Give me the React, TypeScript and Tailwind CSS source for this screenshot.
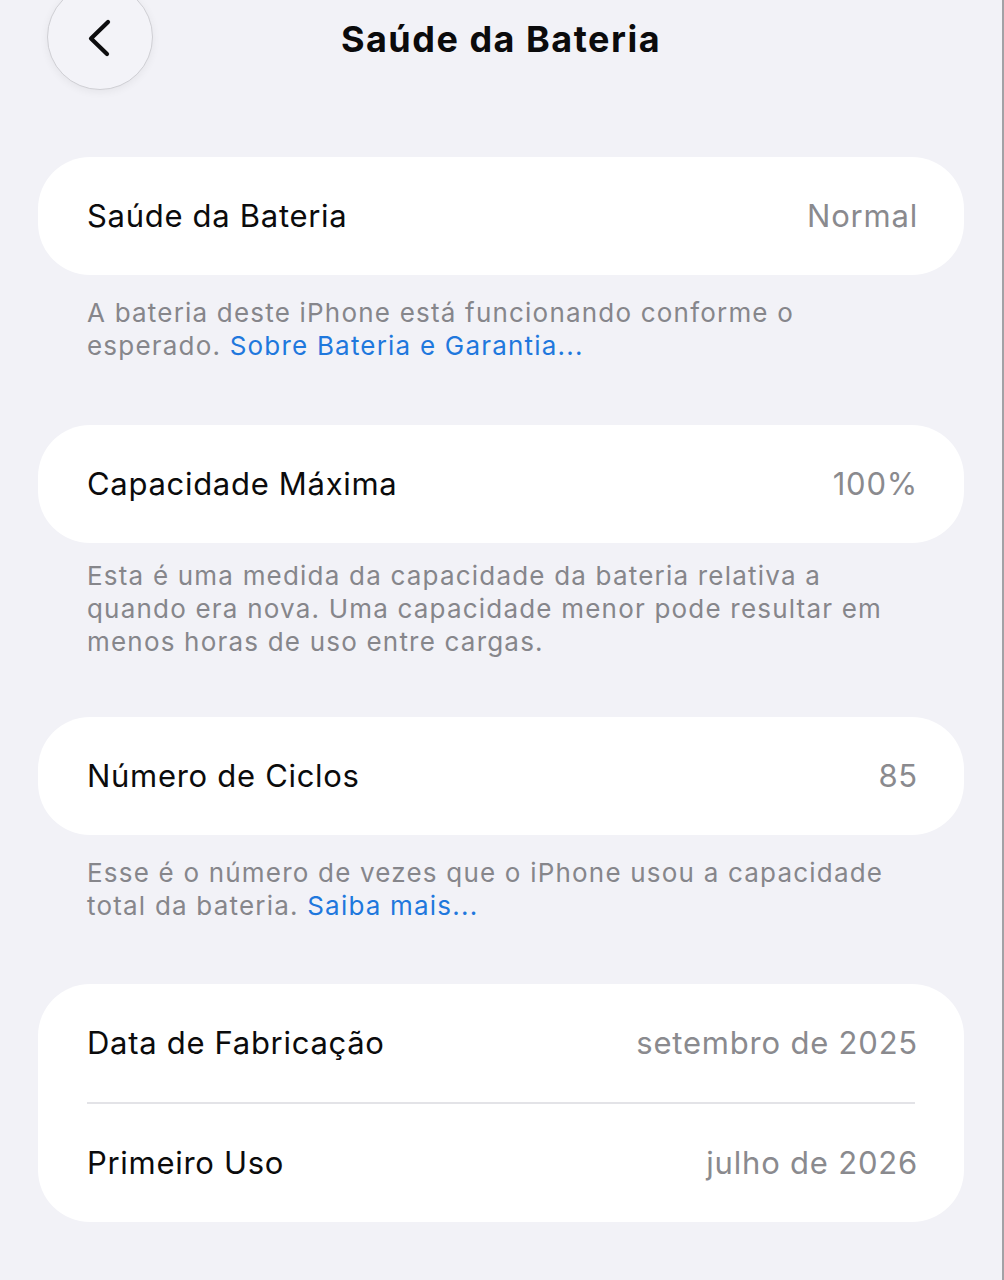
import React from "react";

const font = { fontFamily: "Inter, 'Noto Sans', sans-serif" };

function Row({ label, value }: { label: string; value: string }) {
  return (
    <div className="flex h-[118px] items-center justify-between pl-[49px] pr-[46px]">
      <span className="text-[31px] text-[#0b0b0c] tracking-[0.7px]">{label}</span>
      <span className="text-[31px] text-[#8a8a8e] tracking-[0.8px]">{value}</span>
    </div>
  );
}

export default function App() {
  return (
    <div
      className="relative w-[1004px] min-h-[1280px] bg-[#f2f2f7] border-r-2 border-[#a2a2a6] overflow-hidden"
      style={font}
    >
      {/* Header */}
      <div className="relative h-[80px]">
        <div className="absolute left-[47px] top-[-16px] flex h-[106px] w-[106px] items-center justify-center rounded-full border border-[#cfcfd4] bg-[#f3f3f8] shadow-[0_2px_8px_rgba(0,0,0,0.06)]">
          <svg width="40" height="48" viewBox="0 0 40 48" className="mt-[4px] ml-[1px]">
            <path
              d="M27 7 L10 23.5 L26 39"
              fill="none"
              stroke="#0d0d0f"
              strokeWidth="4.2"
              strokeLinecap="round"
              strokeLinejoin="round"
            />
          </svg>
        </div>
        <div className="flex h-full items-center justify-center pb-[2px]">
          <h1 className="text-[36px] font-bold text-[#0b0b0c] tracking-[1.5px]">Saúde da Bateria</h1>
        </div>
      </div>

      <main className="px-[38px] pt-[77px]">
        <div className="rounded-[52px] bg-white">
          <Row label="Saúde da Bateria" value="Normal" />
        </div>
        <p className="mt-[21px] pl-[49px] pr-[50px] text-[26px] leading-[33px] tracking-[1.2px] text-[#86868b]">
          A bateria deste iPhone está funcionando conforme o esperado.{" "}
          <span className="text-[#1f78dd]">Sobre Bateria e Garantia...</span>
        </p>

        <div className="mt-[63px] rounded-[52px] bg-white">
          <Row label="Capacidade Máxima" value="100%" />
        </div>
        <p className="mt-[16px] pl-[49px] pr-[50px] text-[26px] leading-[33px] tracking-[1.2px] text-[#86868b]">
          Esta é uma medida da capacidade da bateria relativa a quando era nova. Uma capacidade menor pode resultar em menos horas de uso entre cargas.
        </p>

        <div className="mt-[59px] rounded-[52px] bg-white">
          <Row label="Número de Ciclos" value="85" />
        </div>
        <p className="mt-[21px] pl-[49px] pr-[50px] text-[26px] leading-[33px] tracking-[1.2px] text-[#86868b]">
          Esse é o número de vezes que o iPhone usou a capacidade total da bateria.{" "}
          <span className="text-[#1f78dd]">Saiba mais...</span>
        </p>

        <div className="mt-[62px] rounded-[52px] bg-white">
          <Row label="Data de Fabricação" value="setembro de 2025" />
          <div className="ml-[49px] mr-[49px] h-[2px] bg-[#e3e3e7]" />
          <Row label="Primeiro Uso" value="julho de 2026" />
        </div>
      </main>
    </div>
  );
}
